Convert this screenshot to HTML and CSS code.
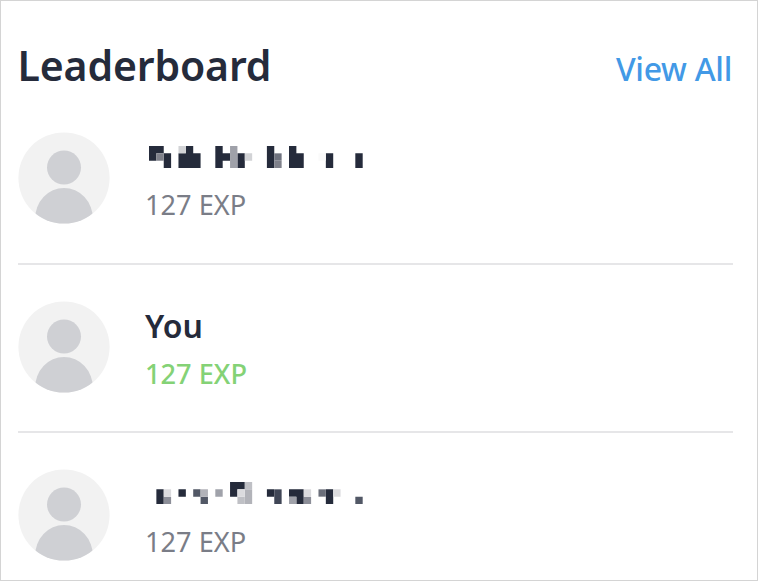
FILE: index.html
```html
<!DOCTYPE html>
<html lang="en">
<head>
<meta charset="utf-8">
<title>Leaderboard</title>
<link rel="stylesheet" href="styles.css">
</head>
<body>
<svg class="defs" aria-hidden="true">
  <defs>
    <clipPath id="disc"><circle cx="46" cy="46" r="45.6"/></clipPath>
    <symbol id="avatar" viewBox="0 0 92 92">
      <circle cx="46" cy="46" r="45.6" fill="#f2f2f2"/>
      <g clip-path="url(#disc)" fill="#cfd0d4">
        <circle cx="46" cy="35.5" r="17"/>
        <ellipse cx="46" cy="87" rx="29" ry="31"/>
      </g>
    </symbol>
  </defs>
</svg>
<main class="card">
  <header class="header">
    <h1 class="title">Leaderboard</h1>
    <a class="view-all">View All</a>
  </header>
  <ul class="list">
    <li class="row">
      <svg class="avatar"><use href="#avatar"/></svg>
      <div class="info">
        <div class="name">
          <svg class="mask" viewBox="0 0 29 3" preserveAspectRatio="none">
            <path fill="#252b3b" d="M0 0h2v1h-1v1h-1zM2 1h1v2h-1zM5 0h1v1h1v2h-3v-2h1zM9 0h1v1h1v1h-1v1h-1zM12 1h1v2h-1zM16 0h1v3h-1zM19 0h1v1h1v2h-2zM24 1h1v2h-1zM28 1h1v2h-1z"/>
            <path fill="#7f818b" d="M1 1h1v1h-1zM17 2h1v1h-1z"/>
            <path fill="#6f737f" d="M17 1h1v1h-1z"/>
            <path fill="#9fa1a9" d="M11 0h1v3h-1z"/>
            <path fill="#d2d3d6" d="M4 0h1v1h-1zM13 1h1v1h-1z"/>
            <path fill="#fafafa" d="M23 1h1v1h-1z"/>
          </svg>
        </div>
        <div class="exp">127 EXP</div>
      </div>
    </li>
    <li class="row">
      <svg class="avatar"><use href="#avatar"/></svg>
      <div class="info">
        <div class="name">You</div>
        <div class="exp exp-own">127 EXP</div>
      </div>
    </li>
    <li class="row">
      <svg class="avatar"><use href="#avatar"/></svg>
      <div class="info">
        <div class="name">
          <svg class="mask mask-raised" viewBox="0 0 29 3" preserveAspectRatio="none">
            <path fill="#252b3b" d="M1 1h1v2h-1zM4 1h1v1h-1zM11 0h2v1h-1v1h-1zM16 1h1v1h-1zM19 1h2v2h-1v-1h-1zM24 1h1v2h-1z"/>
            <path fill="#404656" d="M17 1h1v2h-1z"/>
            <path fill="#525866" d="M6 1h1v1h-1zM7 2h1v1h-1zM28 2h1v1h-1z"/>
            <path fill="#6b6f7b" d="M23 1h1v1h-1z"/>
            <path fill="#8c8e98" d="M2 2h1v1h-1zM21 2h1v1h-1z"/>
            <path fill="#a0a2aa" d="M9 1h1v1h-1zM19 2h1v1h-1z"/>
            <path fill="#b2b3b9" d="M7 1h1v1h-1zM13 1h1v2h-1z"/>
            <path fill="#bfc0c5" d="M13 0h1v1h-1zM12 2h1v1h-1z"/>
            <path fill="#dbdbde" d="M2 1h1v1h-1zM12 1h1v1h-1zM21 1h1v1h-1zM25 1h1v1h-1z"/>
          </svg>
        </div>
        <div class="exp">127 EXP</div>
      </div>
    </li>
  </ul>
</main>
</body>
</html>
```
FILE: styles.css
```css
* { box-sizing: border-box; }
body {
  margin: 0;
  background: #fff;
  font-family: "Noto Sans", "Open Sans", sans-serif;
}
.defs { display: block; width: 0; height: 0; }
.card {
  width: 758px;
  height: 581px;
  overflow: hidden;
  border: 1px solid #d4d4d4;
  padding: 35px 24px 0 17px;
}
.header {
  display: flex;
  justify-content: space-between;
  align-items: baseline;
  height: 60px;
}
.title {
  margin: 0 0 0 -0.5px;
  font-size: 41px;
  font-weight: 600;
  line-height: 58px;
  letter-spacing: -0.15px;
  color: #252b3b;
}
.view-all {
  font-size: 32px;
  font-weight: 500;
  line-height: 44px;
  letter-spacing: -0.3px;
  color: #4299e6;
  margin-right: 1px;
}
.list { margin: 0; padding: 0; list-style: none; }
.row {
  display: flex;
  height: 168.5px;
  padding-top: 36px;
  border-bottom: 2px solid #e6e6e8;
}
.avatar { display: block; flex: none; width: 92px; height: 92px; }
.info { margin-left: 35px; padding-top: 3px; }
.name {
  height: 44px;
  font-size: 32px;
  font-weight: 600;
  line-height: 43px;
  color: #252b3b;
}
.mask { display: block; width: 213.7px; height: 33px; margin-left: 4.2px; padding-top: 11px; }
.mask-raised { height: 32px; padding-top: 10px; }
.exp {
  margin-top: 7px;
  font-size: 27.2px;
  line-height: 38px;
  color: #7a7d87;
}
.exp-own { color: #84d276; font-weight: 500; }
```
